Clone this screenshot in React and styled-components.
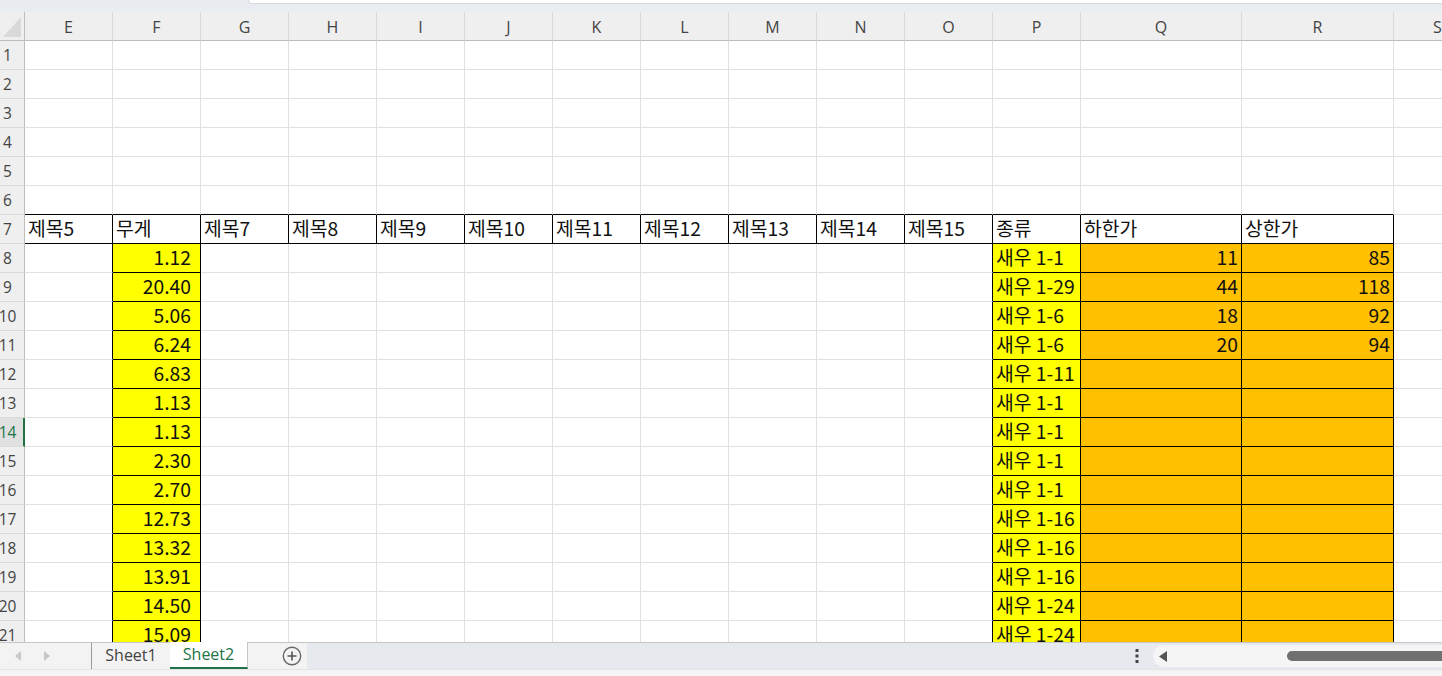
import React from 'react';
import styled, { createGlobalStyle } from 'styled-components';

const GlobalStyle = createGlobalStyle`
  html, body { margin: 0; padding: 0; background: #fff; }
  body { font-family: "Noto Sans CJK KR", "Noto Sans", sans-serif; }
`;

const COLS = [
  { id: 'E', w: 88 }, { id: 'F', w: 88 }, { id: 'G', w: 88 }, { id: 'H', w: 88 },
  { id: 'I', w: 88 }, { id: 'J', w: 88 }, { id: 'K', w: 88 }, { id: 'L', w: 88 },
  { id: 'M', w: 88 }, { id: 'N', w: 88 }, { id: 'O', w: 88 }, { id: 'P', w: 88 },
  { id: 'Q', w: 161 }, { id: 'R', w: 152 }, { id: 'S', w: 88 },
];

const HEAD = ['제목5', '무게', '제목7', '제목8', '제목9', '제목10', '제목11', '제목12', '제목13', '제목14', '제목15', '종류', '하한가', '상한가'];
const WEIGHT = ['1.12', '20.40', '5.06', '6.24', '6.83', '1.13', '1.13', '2.30', '2.70', '12.73', '13.32', '13.91', '14.50', '15.09'];
const KIND = ['새우 1-1', '새우 1-29', '새우 1-6', '새우 1-6', '새우 1-11', '새우 1-1', '새우 1-1', '새우 1-1', '새우 1-1', '새우 1-16', '새우 1-16', '새우 1-16', '새우 1-24', '새우 1-24'];
const LOW = ['11', '44', '18', '20'];
const HIGH = ['85', '118', '92', '94'];

const ROWS = 21;
const SELECTED_ROW = 14;

// column index: E=0 ... S=14
const inBox = (r, c) => {
  if (r === 7) return c >= 0 && c <= 13;
  if (r >= 8 && r <= 21) return c === 1 || c === 11 || c === 12 || c === 13;
  return false;
};

const cellData = (r, c) => {
  if (r === 7 && c <= 13) return { text: HEAD[c] };
  if (r >= 8) {
    const i = r - 8;
    if (c === 1) return { text: WEIGHT[i], fill: '#ffff00', num: true, pad: 9 };
    if (c === 11) return { text: KIND[i], fill: '#ffff00' };
    if (c === 12) return { text: LOW[i] || '', fill: '#ffc000', num: true };
    if (c === 13) return { text: HIGH[i] || '', fill: '#ffc000', num: true };
  }
  return { text: '' };
};

const Frame = styled.div`
  width: 1442px;
  height: 676px;
  overflow: hidden;
  display: flex;
  flex-direction: column;
  background: #fff;
`;

const TopStrip = styled.div`
  height: 12px;
  flex: none;
  background: #e9ecf0;
  display: flex;
`;

const FormulaEdge = styled.div`
  margin-left: 248px;
  flex: 1;
  height: 3px;
  background: #fff;
  border-bottom: 1px solid #d5d8dc;
  border-left: 1px solid #d5d8dc;
  border-bottom-left-radius: 4px;
`;

const Sheet = styled.div`
  flex: 1;
  overflow: hidden;
  display: grid;
  grid-template-columns: 25px ${COLS.map((c) => `${c.w}px`).join(' ')};
  grid-auto-rows: 29px;
  grid-template-rows: 29px;
  align-content: start;
`;

const Corner = styled.div`
  background: #efefef;
  border-right: 1px solid #bdbdbd;
  border-bottom: 1px solid #bdbdbd;
  display: flex;
  align-items: flex-end;
  justify-content: flex-end;
  padding: 0 3px 3px 0;
  box-sizing: border-box;
`;

const ColHead = styled.div`
  background: #efefef;
  border-right: 1px solid #d8d8d8;
  border-bottom: 1px solid #bdbdbd;
  box-sizing: border-box;
  display: flex;
  align-items: center;
  justify-content: center;
  font-family: "Open Sans", "Noto Sans", sans-serif;
  font-size: 16px;
  color: #444;
  padding-top: 1px;
`;

const RowHead = styled.div`
  background: ${(p) => (p.$active ? '#e0e0e0' : '#efefef')};
  border-right: ${(p) => (p.$active ? '2px solid #217346' : '1px solid #bdbdbd')};
  border-bottom: 1px solid #dadada;
  box-sizing: border-box;
  display: flex;
  align-items: center;
  justify-content: center;
  padding-right: ${(p) => (p.$active ? '8px' : '9px')};
  font-family: "Open Sans", "Noto Sans", sans-serif;
  font-size: 15.5px;
  color: ${(p) => (p.$active ? '#217346' : '#444')};
  overflow: hidden;
  white-space: nowrap;
`;

const Cell = styled.div`
  background: ${(p) => p.$fill || '#fff'};
  border-right: 1px solid ${(p) => (p.$rb ? '#000' : '#e1e1e1')};
  border-bottom: 1px solid ${(p) => (p.$bb ? '#000' : '#e1e1e1')};
  box-sizing: border-box;
  display: flex;
  align-items: center;
  justify-content: ${(p) => (p.$num ? 'flex-end' : 'flex-start')};
  padding: 0 ${(p) => (p.$num ? `${p.$pad || 3}px` : '3px')} 3px 3px;
  font-size: 19.3px;
  color: #111;
  white-space: nowrap;
  overflow: hidden;
`;

const TabBar = styled.div`
  height: 27px;
  box-sizing: border-box;
  flex: none;
  border-top: 1px solid #c6c6c6;
  display: flex;
  align-items: stretch;
  background: #e6e9ed;
  font-family: "Open Sans", "Noto Sans", sans-serif;
`;

const NavArea = styled.div`
  width: 92px;
  background: #f3f3f3;
  display: flex;
  align-items: center;
  gap: 21px;
  padding-left: 15px;
  box-sizing: border-box;
  border-right: 1px solid #9a9a9a;
`;

const Tab = styled.div`
  width: 78px;
  box-sizing: border-box;
  display: flex;
  align-items: center;
  justify-content: center;
  font-size: 16px;
  color: ${(p) => (p.$active ? '#217346' : '#444')};
  background: ${(p) => (p.$active ? '#fff' : '#f3f3f3')};
  border-bottom: 2px solid ${(p) => (p.$active ? '#217346' : 'transparent')};
  border-right: ${(p) => (p.$active ? '1px solid #c6c6c6' : 'none')};
  margin-top: ${(p) => (p.$active ? '-1px' : '0')};
  padding-bottom: 1px;
`;

const AddArea = styled.div`
  width: 59px;
  background: #f3f3f3;
  display: flex;
  align-items: center;
  justify-content: flex-end;
  padding-right: 5px;
  box-sizing: border-box;
`;

const Spacer = styled.div`
  flex: 1;
`;

const Dots = styled.div`
  width: 20px;
  display: flex;
  align-items: center;
  justify-content: center;
`;

const Track = styled.div`
  width: 289px;
  margin: 2px 0 2px 6px;
  background: #f5f5f5;
  border-radius: 11px 0 0 11px;
  display: flex;
  align-items: center;
  padding-left: 6px;
  box-sizing: border-box;
`;

const Thumb = styled.div`
  margin-left: 119px;
  flex: 1;
  height: 10px;
  background: #707070;
  border-radius: 5px 0 0 5px;
`;

const BottomStrip = styled.div`
  height: 7px;
  box-sizing: border-box;
  flex: none;
  background: #f4f4f4;
  border-top: 1px solid #e2e4e8;
`;

const Arrow = ({ dir }) => (
  <svg width="7" height="10" viewBox="0 0 7 10">
    {dir === 'left'
      ? <path d="M6 0 L0 5 L6 10 Z" fill="#c8c8c8" />
      : <path d="M1 0 L7 5 L1 10 Z" fill="#c8c8c8" />}
  </svg>
);

export default function App() {
  const rows = [];
  for (let r = 1; r <= ROWS; r++) {
    rows.push(
      <RowHead key={`h${r}`} $active={r === SELECTED_ROW}>{r}</RowHead>
    );
    COLS.forEach((col, c) => {
      const d = cellData(r, c);
      const rb = inBox(r, c) || inBox(r, c + 1);
      const bb = inBox(r, c) || inBox(r + 1, c);
      rows.push(
        <Cell key={`${col.id}${r}`} $fill={d.fill} $num={d.num} $pad={d.pad} $rb={rb} $bb={bb}>
          {d.text}
        </Cell>
      );
    });
  }

  return (
    <Frame>
      <GlobalStyle />
      <TopStrip>
        <FormulaEdge />
      </TopStrip>
      <Sheet>
        <Corner>
          <svg width="18" height="20" viewBox="0 0 18 20">
            <path d="M18 0 L18 20 L0 20 Z" fill="#d9d9d9" />
          </svg>
        </Corner>
        {COLS.map((col) => (
          <ColHead key={col.id}>{col.id}</ColHead>
        ))}
        {rows}
      </Sheet>
      <TabBar>
        <NavArea>
          <Arrow dir="left" />
          <Arrow dir="right" />
        </NavArea>
        <Tab>Sheet1</Tab>
        <Tab $active>Sheet2</Tab>
        <AddArea>
          <svg width="20" height="20" viewBox="0 0 20 20">
            <circle cx="10" cy="10" r="8.7" fill="none" stroke="#666" strokeWidth="1.4" />
            <path d="M10 5.5 V14.5 M5.5 10 H14.5" stroke="#555" strokeWidth="1.6" />
          </svg>
        </AddArea>
        <Spacer />
        <Dots>
          <svg width="4" height="14" viewBox="0 0 4 14">
            <rect x="0.5" y="0" width="3" height="3" fill="#444" />
            <rect x="0.5" y="5.5" width="3" height="3" fill="#444" />
            <rect x="0.5" y="11" width="3" height="3" fill="#444" />
          </svg>
        </Dots>
        <Track>
          <svg width="9" height="11" viewBox="0 0 9 11">
            <path d="M8 0 L0 5.5 L8 11 Z" fill="#555" />
          </svg>
          <Thumb />
        </Track>
      </TabBar>
      <BottomStrip />
    </Frame>
  );
}
